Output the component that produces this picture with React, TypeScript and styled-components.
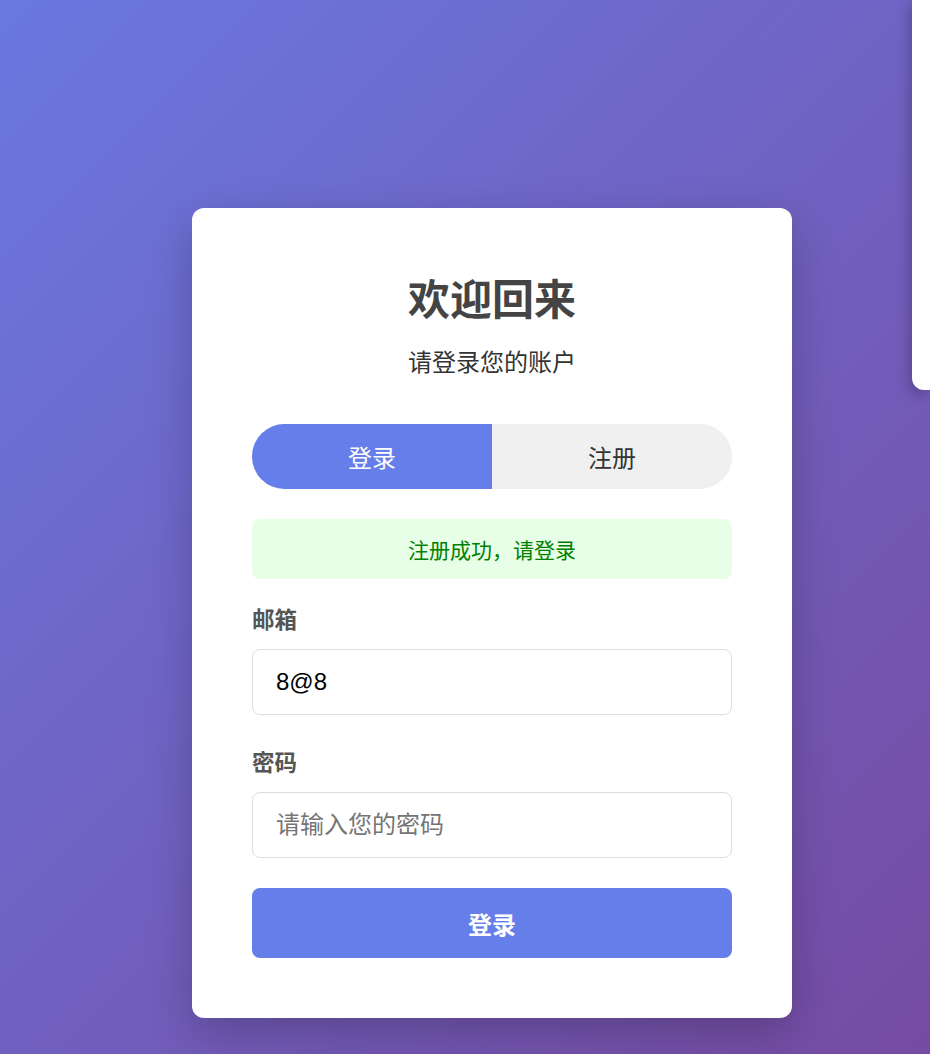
import React, { FC, useState } from "react";
import styled, { createGlobalStyle } from "styled-components";

const GlobalStyle = createGlobalStyle`
  html, body {
    margin: 0;
    padding: 0;
    height: 100%;
  }
  body {
    font-family: "Liberation Sans", "Noto Sans CJK SC", sans-serif;
    background: linear-gradient(135deg, #6a78e0 0%, #764ba2 100%);
    background-attachment: fixed;
    min-height: 100vh;
    overflow: hidden;
  }
  * { box-sizing: border-box; }
`;

const Page = styled.div`
  min-height: 100vh;
  display: flex;
  justify-content: center;
  align-items: flex-start;
  padding: 208px 0 0 54px;
`;

const Card = styled.div`
  width: 600px;
  background: #fff;
  border-radius: 12px;
  padding: 60px;
  box-shadow: 0 15px 45px rgba(0, 0, 0, 0.22);
`;

const Header = styled.div`
  text-align: center;
  margin-bottom: 43px;
`;

const Title = styled.h1`
  margin: 0;
  font-size: 42px;
  line-height: 66px;
  font-weight: 700;
  color: #444;
`;

const Subtitle = styled.p`
  margin: 11px 0 0;
  font-size: 24px;
  line-height: 36px;
  color: #333;
`;

const Tabs = styled.div`
  display: flex;
  height: 65px;
  border-radius: 33px;
  overflow: hidden;
  background: #f0f0f0;
  margin-bottom: 30px;
`;

const Tab = styled.button<{ $active?: boolean }>`
  flex: 1;
  border: none;
  font-family: inherit;
  font-size: 24px;
  cursor: pointer;
  background: ${p => (p.$active ? "#667eea" : "#f0f0f0")};
  color: ${p => (p.$active ? "#fff" : "#333")};
`;

const Notice = styled.div`
  height: 60px;
  display: flex;
  align-items: center;
  justify-content: center;
  background: #e6ffe6;
  color: #008000;
  border-radius: 8px;
  font-size: 21px;
  margin-bottom: 25px;
`;

const Field = styled.div`
  margin-bottom: 32px;
`;

const Label = styled.label`
  display: block;
  font-size: 22.5px;
  line-height: 34px;
  font-weight: 700;
  color: #555;
  margin-bottom: 11px;
`;

const Input = styled.input`
  display: block;
  width: 100%;
  height: 66px;
  padding: 0 23px;
  border: 1.5px solid #ddd;
  border-radius: 8px;
  font-family: inherit;
  font-size: 24px;
  color: #000;
  outline: none;
  &::placeholder {
    color: #757575;
  }
`;

const Submit = styled.button`
  display: block;
  width: 100%;
  height: 70px;
  margin-top: -2px;
  border: none;
  border-radius: 8px;
  background: #667eea;
  color: #fff;
  font-family: inherit;
  font-size: 24px;
  font-weight: 700;
  cursor: pointer;
`;

// edge of a panel that sits mostly off-screen on the right
const SidePanel = styled.div`
  position: fixed;
  top: 0;
  right: 0;
  width: 18px;
  height: 390px;
  background: #fff;
  border-bottom-left-radius: 12px;
  box-shadow: -2px 4px 14px rgba(0, 0, 0, 0.25);
`;

const App: FC = () => {
  const [mode, setMode] = useState<"login" | "register">("login");
  const [email, setEmail] = useState("8@8");
  const [password, setPassword] = useState("");

  return (
    <>
      <GlobalStyle />
      <Page>
        <Card>
          <Header>
            <Title>欢迎回来</Title>
            <Subtitle>请登录您的账户</Subtitle>
          </Header>

          <Tabs>
            <Tab $active={mode === "login"} onClick={() => setMode("login")}>
              登录
            </Tab>
            <Tab $active={mode === "register"} onClick={() => setMode("register")}>
              注册
            </Tab>
          </Tabs>

          <Notice>注册成功，请登录</Notice>

          <Field>
            <Label htmlFor="email">邮箱</Label>
            <Input id="email" type="email" value={email} onChange={e => setEmail(e.target.value)} />
          </Field>

          <Field>
            <Label htmlFor="password">密码</Label>
            <Input
              id="password"
              type="password"
              placeholder="请输入您的密码"
              value={password}
              onChange={e => setPassword(e.target.value)}
            />
          </Field>

          <Submit type="button">登录</Submit>
        </Card>
      </Page>
      <SidePanel />
    </>
  );
};

export default App;
